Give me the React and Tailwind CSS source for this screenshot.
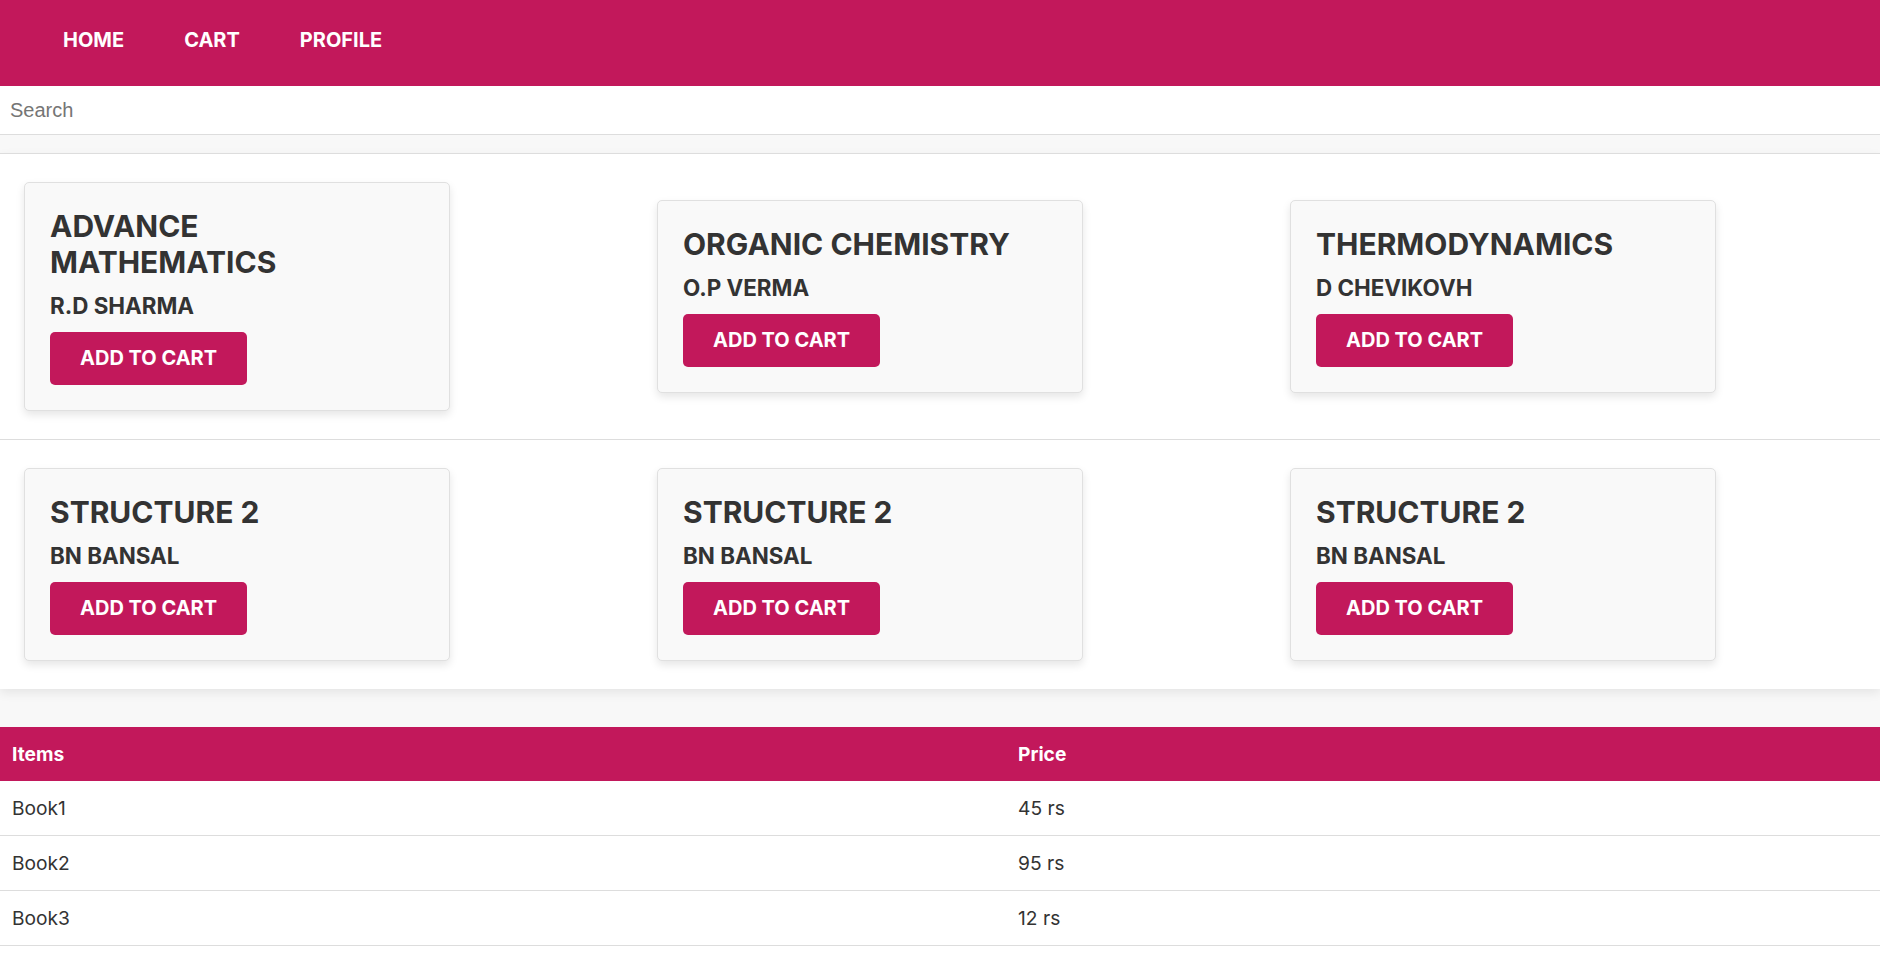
const books = [
  [
    { title: 'ADVANCE MATHEMATICS', author: 'R.D SHARMA' },
    { title: 'ORGANIC CHEMISTRY', author: 'O.P VERMA' },
    { title: 'THERMODYNAMICS', author: 'D CHEVIKOVH' },
  ],
  [
    { title: 'STRUCTURE 2', author: 'BN BANSAL' },
    { title: 'STRUCTURE 2', author: 'BN BANSAL' },
    { title: 'STRUCTURE 2', author: 'BN BANSAL' },
  ],
];

const cartItems = [
  { name: 'Book1', price: '45 rs' },
  { name: 'Book2', price: '95 rs' },
  { name: 'Book3', price: '12 rs' },
];

function BookCard({ title, author }) {
  return (
    <div className="w-[426px] max-w-[426px] shrink-0 rounded-[5px] border border-[#e0e0e0] bg-[#f9f9f9] p-[25px] shadow-[0_4px_8px_rgba(0,0,0,0.1)]">
      <h2 className="text-[30px] font-bold leading-[36px] text-[#333]">{title}</h2>
      <p className="mt-[12px] text-[22.4px] font-bold leading-[28px] text-[#333]">{author}</p>
      <button
        type="button"
        className="mt-[12px] rounded-[5px] bg-[#c2185b] px-[30px] py-[14px] text-[20px] font-bold leading-[25px] text-white"
      >
        ADD TO CART
      </button>
    </div>
  );
}

export default function App() {
  return (
    <div className="min-h-screen bg-white font-['Inter',sans-serif] text-[#333]">
      <nav className="h-[86px] bg-[#c2185b] pl-[63px] pt-[28px]">
        <ul className="flex gap-[60px] text-[20px] font-bold leading-[24px] text-white">
          <li>HOME</li>
          <li>CART</li>
          <li>PROFILE</li>
        </ul>
      </nav>

      <input
        type="text"
        placeholder="Search"
        className="block h-[49px] w-full border-b border-[#ddd] bg-white px-[10px] font-['Liberation_Sans',Arial,sans-serif] text-[20px] outline-none placeholder:text-[#757575]"
      />

      <div className="h-[18px] bg-[#f8f8f8]" />

      <section className="relative border-t border-[#ddd] bg-white shadow-[0_4px_10px_rgba(0,0,0,0.08)]">
        {books.map((row, rowIndex) => (
          <div
            key={rowIndex}
            className={`flex items-center gap-[207px] py-[28px] pl-[24px] ${
              rowIndex === 0 ? 'border-b border-[#ddd]' : ''
            }`}
          >
            {row.map((book, index) => (
              <BookCard key={index} title={book.title} author={book.author} />
            ))}
          </div>
        ))}
      </section>

      <div className="h-[38px] bg-[#f8f8f8]" />

      <table className="w-full border-collapse text-left text-[19.2px]">
        <thead>
          <tr className="bg-[#c2185b] text-white">
            <th className="w-[1006px] px-[12px] py-[15px] font-bold leading-[24px]">Items</th>
            <th className="px-[12px] py-[15px] font-bold leading-[24px]">Price</th>
          </tr>
        </thead>
        <tbody>
          {cartItems.map((item) => (
            <tr key={item.name} className="border-b border-[#ddd]">
              <td className="px-[12px] py-[15px] leading-[24px]">{item.name}</td>
              <td className="px-[12px] py-[15px] leading-[24px]">{item.price}</td>
            </tr>
          ))}
        </tbody>
      </table>
    </div>
  );
}
